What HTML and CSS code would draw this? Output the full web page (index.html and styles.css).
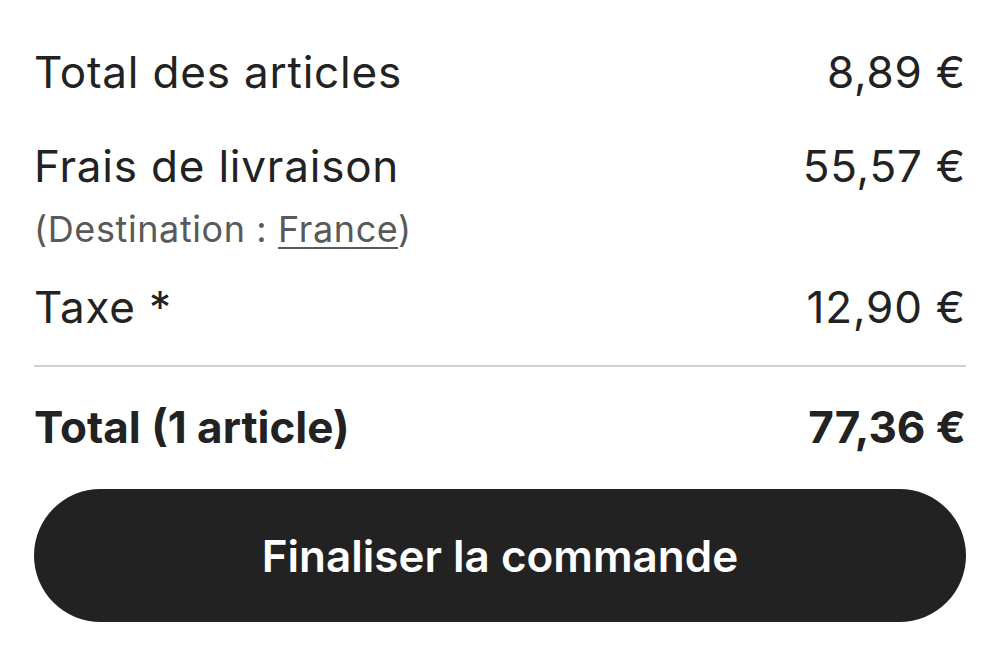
FILE: index.html
```html
<!DOCTYPE html>
<html lang="fr">
<head>
<meta charset="utf-8">
<link rel="stylesheet" href="styles.css">
</head>
<body>
<main class="summary">
  <div class="row">
    <span class="label">Total des articles</span>
    <span class="amount">8,89 €</span>
  </div>
  <div class="row row-shipping">
    <span class="label">Frais de livraison</span>
    <span class="amount">55,57 €</span>
  </div>
  <div class="note">(Destination : <a class="link" href="#">France</a>)</div>
  <div class="row row-tax">
    <span class="label">Taxe *</span>
    <span class="amount">12,90 €</span>
  </div>
  <hr class="divider">
  <div class="row row-total">
    <span class="label">Total (1 article)</span>
    <span class="amount">77,36 €</span>
  </div>
  <button class="cta" type="button">Finaliser la commande</button>
</main>
</body>
</html>
```

FILE: styles.css
```css
html, body {
  margin: 0;
  padding: 0;
  background: #fff;
}
body {
  font-family: Inter, "Noto Sans", sans-serif;
  color: #222;
}
.summary {
  display: flex;
  flex-direction: column;
  padding: 43px 34px 0 34px;
}
.row {
  display: flex;
  justify-content: space-between;
  align-items: baseline;
  font-size: 44px;
  line-height: 58px;
  letter-spacing: 0.8px;
}
.row-shipping {
  margin-top: 36px;
}
.note {
  font-size: 36px;
  line-height: 44px;
  letter-spacing: 0.6px;
  color: #595959;
  margin-top: 12px;
}
.link {
  color: #595959;
  text-decoration: underline;
  text-underline-offset: 5px;
  text-decoration-thickness: 2px;
}
.row-tax {
  margin-top: 27px;
}
.divider {
  border: 0;
  height: 2px;
  background: #d0d0d0;
  margin: 29px 0 0 0;
}
.row-total {
  margin-top: 31px;
  font-weight: 700;
  letter-spacing: 0;
}
.cta {
  margin-top: 33px;
  height: 133px;
  border: 0;
  border-radius: 67px;
  background: #222;
  color: #fff;
  font-family: inherit;
  font-size: 44px;
  font-weight: 600;
}
```
